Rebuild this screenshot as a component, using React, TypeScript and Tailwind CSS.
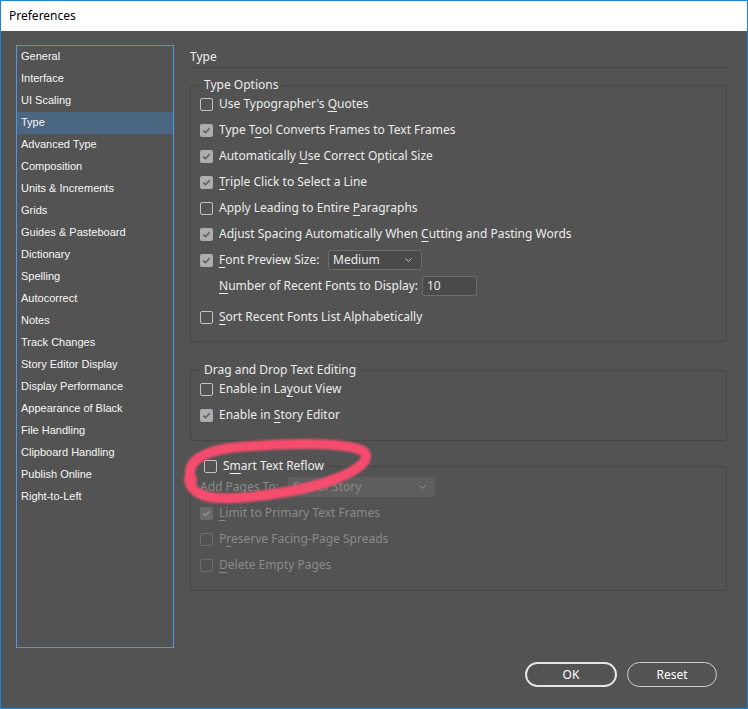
import React from "react";

const sidebar = [
  "General",
  "Interface",
  "UI Scaling",
  "Type",
  "Advanced Type",
  "Composition",
  "Units & Increments",
  "Grids",
  "Guides & Pasteboard",
  "Dictionary",
  "Spelling",
  "Autocorrect",
  "Notes",
  "Track Changes",
  "Story Editor Display",
  "Display Performance",
  "Appearance of Black",
  "File Handling",
  "Clipboard Handling",
  "Publish Online",
  "Right-to-Left",
];

function Box({ checked, disabled }: { checked?: boolean; disabled?: boolean }) {
  if (checked) {
    return (
      <span
        className={
          "flex h-[13px] w-[13px] shrink-0 items-center justify-center rounded-[2px] " +
          (disabled ? "bg-[#6a6a6a]" : "bg-[#adadad]")
        }
      >
        <svg width="9" height="9" viewBox="0 0 9 9">
          <path
            d="M1.3 4.6 L3.5 6.7 L7.7 2.2"
            fill="none"
            stroke={disabled ? "#8f8f8f" : "#5f5f5f"}
            strokeWidth="1.6"
          />
        </svg>
      </span>
    );
  }
  return (
    <span
      className={
        "h-[13px] w-[13px] shrink-0 rounded-[2px] border " +
        (disabled ? "border-[#6e6e6e]" : "border-[#c4c4c4]")
      }
    />
  );
}

function U({ children }: { children: React.ReactNode }) {
  return <span className="underline decoration-1 underline-offset-[3px]">{children}</span>;
}

function Row({
  checked,
  disabled,
  children,
}: {
  checked?: boolean;
  disabled?: boolean;
  children: React.ReactNode;
}) {
  return (
    <div className="flex h-[26px] items-center pl-[9px]">
      <Box checked={checked} disabled={disabled} />
      <span className={"ml-[6px] whitespace-nowrap " + (disabled ? "text-[#8a8a8a]" : "text-[#ececec]")}>
        {children}
      </span>
    </div>
  );
}

function Chevron({ color }: { color: string }) {
  return (
    <svg width="9" height="6" viewBox="0 0 9 6">
      <path d="M1.5 1.5 L4.5 4.4 L7.5 1.5" fill="none" stroke={color} strokeWidth="1" />
    </svg>
  );
}

export default function App() {
  return (
    <div
      className="relative flex h-[709px] w-[748px] flex-col border border-[#1b84d6] bg-[#535353] text-[12px] text-[#ececec]"
      style={{ fontFamily: '"Noto Sans", "Segoe UI", Arial, sans-serif' }}
    >
      {/* title bar */}
      <div className="flex h-[30px] shrink-0 items-center bg-white pl-[8px] text-[12px] text-black">
        Preferences
      </div>

      {/* body */}
      <div className="flex pl-[15px] pt-[14px]">
        {/* sidebar */}
        <div
          className="flex h-[603px] w-[158px] shrink-0 flex-col border border-[#5196de] text-[11px]"
          style={{ fontFamily: '"Liberation Sans", Arial, sans-serif' }}
        >
          {sidebar.map((s) => (
            <div
              key={s}
              className={
                "flex h-[22px] shrink-0 items-center pb-[1px] pl-[4px] text-[#f6f6f6] " +
                (s === "Type" ? "bg-[#4b6680]" : "")
              }
            >
              {s}
            </div>
          ))}
        </div>

        {/* right panel */}
        <div className="ml-[16px] flex w-[537px] flex-col">
          <div className="flex h-[23px] items-center border-b border-[#474747] pt-[1px] text-[12px] text-[#f0f0f0]">
            Type
          </div>

          {/* Type Options */}
          <fieldset className="mt-[11px] rounded-[3px] border border-[#464646] pb-[11px]">
            <legend className="ml-[9px] h-[12px] px-[4px] leading-[12px]">Type Options</legend>
            <Row>
              Use Typographer's <U>Q</U>uotes
            </Row>
            <Row checked>
              Type T<U>o</U>ol Converts Frames to Text Frames
            </Row>
            <Row checked>
              Automatically <U>U</U>se Correct Optical Size
            </Row>
            <Row checked>
              <U>T</U>riple Click to Select a Line
            </Row>
            <Row>
              Apply Leading to Entire <U>P</U>aragraphs
            </Row>
            <Row checked>
              Adjust Spacing Automatically When <U>C</U>utting and Pasting Words
            </Row>
            <div className="flex h-[26px] items-center pl-[9px]">
              <Box checked />
              <span className="ml-[6px] w-[109px] whitespace-nowrap">
                <U>F</U>ont Preview Size:
              </span>
              <div className="flex h-[20px] w-[94px] items-center justify-between rounded-[2px] border border-[#6b6b6b] bg-[#4a4a4a] pl-[4px] pr-[8px]">
                <span>Medium</span>
                <Chevron color="#c8c8c8" />
              </div>
            </div>
            <div className="flex h-[26px] items-center pl-[28px]">
              <span className="w-[203px] whitespace-nowrap">
                <U>N</U>umber of Recent Fonts to Display:
              </span>
              <div className="flex h-[20px] w-[55px] items-center rounded-[2px] border border-[#6b6b6b] bg-[#4a4a4a] pl-[4px]">
                10
              </div>
            </div>
            <div className="mt-[5px]">
              <Row>
                <U>S</U>ort Recent Fonts List Alphabetically
              </Row>
            </div>
          </fieldset>

          {/* Drag and Drop */}
          <fieldset className="mt-[22px] rounded-[3px] border border-[#464646] pb-[12px]">
            <legend className="ml-[9px] h-[12px] px-[4px] leading-[12px]">Drag and Drop Text Editing</legend>
            <Row>
              Enable in La<U>y</U>out View
            </Row>
            <Row checked>
              Enable in <U>S</U>tory Editor
            </Row>
          </fieldset>

          {/* Smart Text Reflow */}
          <fieldset className="mt-[19px] rounded-[3px] border border-[#464646] pb-[12px]">
            <legend className="ml-[10px] flex h-[12px] items-center px-[3px]">
              <Box />
              <span className="ml-[6px]">
                S<U>m</U>art Text Reflow
              </span>
            </legend>
            <div className="box-content flex h-[26px] items-center pl-[9px] pt-[2px] text-[#8a8a8a]">
              <span className="w-[88px] whitespace-nowrap">
                <U>A</U>dd Pages To:
              </span>
              <div className="flex h-[20px] w-[147px] items-center justify-between rounded-[2px] bg-[#5e5e5e] pl-[5px] pr-[8px]">
                <span>End of Story</span>
                <Chevron color="#9a9a9a" />
              </div>
            </div>
            <Row checked disabled>
              <U>L</U>imit to Primary Text Frames
            </Row>
            <Row disabled>
              P<U>r</U>eserve Facing-Page Spreads
            </Row>
            <Row disabled>
              <U>D</U>elete Empty Pages
            </Row>
          </fieldset>
        </div>
      </div>

      {/* buttons */}
      <div className="mt-[14px] flex justify-end gap-[10px] pr-[30px]">
        <button className="flex h-[25px] w-[92px] items-center justify-center rounded-full border-2 border-[#e6e6e6] text-[12px] text-white">
          OK
        </button>
        <button className="flex h-[25px] w-[90px] items-center justify-center rounded-full border border-[#cfcfcf] text-[12px] text-white">
          Reset
        </button>
      </div>

      {/* annotation scribble */}
      <svg
        className="pointer-events-none absolute left-[-1px] top-[-1px]"
        width="748"
        height="709"
        viewBox="0 0 748 709"
      >
        <path
          d="M192 480 C 184 464, 200 450, 240 447 C 290 443, 345 442, 363 451 C 372 458, 360 470, 335 479 C 310 489, 270 496, 235 498 C 205 500, 190 493, 189 478"
          fill="none"
          stroke="#f64d6e"
          strokeWidth="10"
          strokeLinecap="round"
          style={{ filter: "blur(0.8px)" }}
        />
      </svg>
    </div>
  );
}
